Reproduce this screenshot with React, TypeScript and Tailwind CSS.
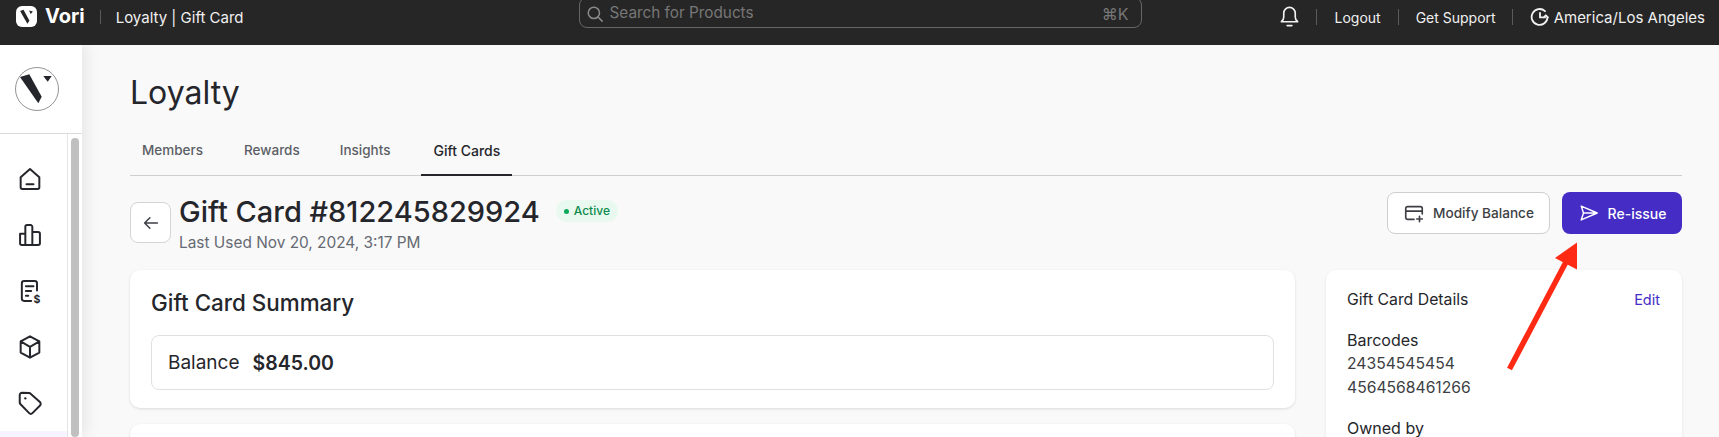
import React from "react";

function Sep({ h = "h-[14px]" }: { h?: string }) {
  return <div className={`w-px ${h} bg-[#5a5a5a]`} />;
}

const navIcons = [
  <path key="h" d="M4 10.5 12 3.5l8 7V19a1.5 1.5 0 0 1-1.5 1.5h-13A1.5 1.5 0 0 1 4 19ZM9 16.5h6" />,
  <path key="b" d="M3.5 11H8v9.5H5A1.5 1.5 0 0 1 3.5 19ZM8 5a1.5 1.5 0 0 1 1.5-1.5h3A1.5 1.5 0 0 1 14 5v15.5H8ZM14 9.5h4.9a1.6 1.6 0 0 1 1.6 1.6V19a1.5 1.5 0 0 1-1.5 1.5h-5" />,
  <path key="r" d="M13 20.5H7a2 2 0 0 1-2-2v-13a2 2 0 0 1 2-2h9a2 2 0 0 1 2 2v6M8.5 8h6.5M8.5 12h4.5M8.5 16h2" />,
  <path key="c" d="M12 2.8 20 7.2v9.6l-8 4.4-8-4.4V7.2ZM4 7.2l8 4.6 8-4.6M12 11.8v9.4" />,
  <path key="t" d="M3.2 5.2A2 2 0 0 1 5.2 3.2L11.4 3.5a2 2 0 0 1 1.1.5l8 7.2a2 2 0 0 1 .1 2.9l-6.5 6.6a2 2 0 0 1-2.8 0l-7.6-7.8a2 2 0 0 1-.5-1.2Z" />,
];

export default function App() {
  return (
    <div className="relative flex h-[437px] w-[1719px] flex-col overflow-hidden bg-[#f9f9f9] font-['Inter',sans-serif] text-[#25262b]">
      <header className="relative z-20 flex h-[45px] shrink-0 items-start bg-[#262626] text-white">
        <div className="ml-[16px] mt-[6px] flex h-[21px] w-[21px] items-center justify-center rounded-[6px] bg-white">
          <svg viewBox="0 0 40 40" className="h-[17px] w-[17px]">
            <polygon points="5,7 13,4 27,30 22,37" fill="#262626" />
            <polygon points="26,6 35,8 30,14" fill="#262626" />
          </svg>
        </div>
        <span className="ml-[8px] mt-[4px] text-[20px] font-bold leading-[24px]">Vori</span>
        <div className="ml-[15px] mt-[10px]"><Sep /></div>
        <span className="ml-[15px] mt-[7px] text-[15px] leading-[22px] text-[#f0f0f0]">Loyalty | Gift Card</span>
        <div className="ml-[335px] -mt-[3px] flex h-[31px] w-[563px] items-center rounded-[8px] border border-[#666] pl-[6px] pr-[12px] pt-[2px] text-[#777]">
          <svg viewBox="0 0 24 24" className="h-[18px] w-[18px]" fill="none" stroke="#8a8a8a" strokeWidth="2" strokeLinecap="round">
            <circle cx="10.5" cy="10.5" r="7.5" /><path d="m16 16 5.5 5.5" />
          </svg>
          <span className="ml-[6px] flex-1 text-[15.3px]">Search for Products</span>
          <span className="text-[16px]">⌘K</span>
        </div>
        <div className="ml-auto flex items-start pr-[14px]">
          <div className="mt-[5px]">
            <svg viewBox="0 0 24 24" className="h-[23px] w-[23px]" fill="none" stroke="#f2f2f2" strokeWidth="1.7" strokeLinecap="round" strokeLinejoin="round">
              <path d="M3.5 17.5c1.6-1.2 2.5-2.6 2.5-5V8.5a6 6 0 0 1 12 0v4c0 2.4.9 3.8 2.5 5ZM9.5 21.5h5" />
            </svg>
          </div>
          <div className="ml-[15px] mt-[9px]"><Sep h="h-[16px]" /></div>
          <span className="ml-[17px] mt-[7px] text-[14px] leading-[22px] text-[#f0f0f0]">Logout</span>
          <div className="ml-[17px] mt-[9px]"><Sep h="h-[16px]" /></div>
          <span className="ml-[17px] mt-[7px] text-[14px] leading-[22px] text-[#f0f0f0]">Get Support</span>
          <div className="ml-[16px] mt-[9px]"><Sep h="h-[16px]" /></div>
          <div className="ml-[17px] mt-[7px]">
            <svg viewBox="0 0 24 24" className="h-[20px] w-[20px]" fill="none" stroke="#f2f2f2" strokeWidth="2.2" strokeLinecap="round" strokeLinejoin="round">
              <path d="M21 12a9.5 9.5 0 1 1-3-7M12 7v5.5h6M21.5 12.5l-2.5-2.5-2.5 2.5" />
            </svg>
          </div>
          <span className="ml-[4px] mt-[7px] whitespace-nowrap text-[15px] leading-[22px] text-[#f0f0f0]">America/Los Angeles</span>
        </div>
      </header>

      <div className="flex min-h-0 flex-1">
        <aside className="z-10 -mt-px flex w-[82px] shrink-0 flex-col bg-white shadow-[4px_0_14px_rgba(0,0,0,0.08)]">
          <div className="flex h-[90px] shrink-0 items-center justify-center border-b border-[#dcdcdc] pr-[8px]">
            <svg viewBox="0 0 44 44" className="h-[44px] w-[44px]">
              <circle cx="22" cy="22" r="21.5" fill="#fff" stroke="#777" strokeWidth="0.8" />
              <polygon points="5,10 14.3,7.3 26.7,29.7 23.3,36.3" fill="#25262b" />
              <polygon points="28.3,9 36.7,9 32.7,14.7" fill="#25262b" />
            </svg>
          </div>
          <div className="flex min-h-0 flex-1">
            <div className="flex flex-1 flex-col border-r border-[#e5e5e5] pt-[17px]">
              {navIcons.map((icon, i) => (
                <div key={i} className="flex h-[56px] shrink-0 items-center justify-center pr-[7px]">
                  <svg viewBox="0 0 24 24" className="h-[28px] w-[28px]" fill="none" stroke="#25262b" strokeWidth="1.7" strokeLinecap="round" strokeLinejoin="round">
                    {icon}
                    {i === 2 && <text x="15" y="22" fontSize="9" fontWeight="700" fill="#25262b" stroke="none">$</text>}
                    {i === 4 && <circle cx="8" cy="8" r="1" fill="#25262b" stroke="none" />}
                  </svg>
                </div>
              ))}
              <div className="h-[56px] shrink-0 bg-[#f6f5ff]" />
            </div>
            <div className="w-[14px] shrink-0 px-[3px] pt-[4px]">
              <div className="h-full rounded-full bg-[#c0c0c0]" />
            </div>
          </div>
        </aside>

        <main className="min-w-0 flex-1 pl-[48px] pr-[37px]">
          <h1 className="mt-[28px] text-[32px] font-normal leading-[40px] text-[#25262b]">Loyalty</h1>
          <nav className="mt-[21px] flex h-[42px] border-b border-[#cfcfcf] text-[13.5px] font-medium text-[#5c5f66]">
            <div className="px-[12px] pt-[6px]">Members</div>
            <div className="ml-[17px] px-[12px] pt-[6px]">Rewards</div>
            <div className="ml-[16px] px-[12px] pt-[6px]">Insights</div>
            <div className="-mb-px ml-[19px] h-[42px] w-[91px] border-b-2 border-[#25262b] px-[12px] pt-[6px] text-[14px] text-[#25262b]">Gift Cards</div>
          </nav>

          <div className="mt-[16px] flex items-start">
            <button className="mt-[10px] flex h-[41px] w-[41px] items-center justify-center rounded-[8px] border border-[#d4d4d4] bg-white">
              <svg viewBox="0 0 24 24" className="h-[18px] w-[18px]" fill="none" stroke="#3d3f45" strokeWidth="2" strokeLinecap="round" strokeLinejoin="round">
                <path d="M20.5 12h-17M10.5 5l-7 7 7 7" />
              </svg>
            </button>
            <div className="ml-[8px] mt-[1px]">
              <div className="flex items-start">
                <span className="text-[29px] font-medium leading-[38px] text-[#25262b]">Gift Card #812245829924</span>
                <div className="ml-[16px] mt-[7px] flex h-[22px] items-center rounded-full bg-[#e9f9ef] px-[8px] text-[12px] font-medium text-[#0b8a4b]">
                  <span className="mr-[5px] h-[5px] w-[5px] rounded-full bg-[#0aa85a]" />
                  Active
                </div>
              </div>
              <div className="text-[15.4px] leading-[23px] text-[#666a73]">Last Used Nov 20, 2024, 3:17 PM</div>
            </div>
            <div className="ml-auto flex gap-[12px]">
              <button className="flex h-[42px] w-[163px] items-center justify-center rounded-[8px] border border-[#cfcfcf] bg-white text-[13.6px] font-medium text-[#3d3f45]">
                <svg viewBox="0 0 24 24" className="mr-[8px] h-[22px] w-[22px]" fill="none" stroke="#3d3f45" strokeWidth="1.8" strokeLinecap="round" strokeLinejoin="round">
                  <path d="M12 19H5a2 2 0 0 1-2-2V7a2 2 0 0 1 2-2h14a2 2 0 0 1 2 2v6M3 10h18M18 15.5v6M15 18.5h6" />
                </svg>
                Modify Balance
              </button>
              <button className="flex h-[42px] w-[120px] items-center justify-center rounded-[8px] bg-[#442cc4] text-[14px] font-medium text-white">
                <svg viewBox="0 0 24 24" className="mr-[8px] h-[22px] w-[22px]" fill="none" stroke="#fff" strokeWidth="1.6" strokeLinecap="round" strokeLinejoin="round">
                  <path d="M3.5 4.5 21 12 3.5 19.5l2.5-7.5ZM6 12h15" />
                </svg>
                Re-issue
              </button>
            </div>
          </div>

          <div className="mt-[16px] flex items-start gap-[31px]">
            <div className="flex w-[1165px] shrink-0 flex-col gap-[16px]">
              <section className="h-[138px] rounded-[10px] bg-white px-[21px] pt-[17px] shadow-[0_1px_3px_rgba(0,0,0,0.12)]">
                <h2 className="text-[22.4px] font-medium leading-[32px]">Gift Card Summary</h2>
                <div className="mt-[16px] flex h-[55px] items-center rounded-[8px] border border-[#e0e0e0] pl-[16px] pt-[2px]">
                  <span className="text-[19px]">Balance</span>
                  <span className="ml-[13px] text-[19.5px] font-semibold">$845.00</span>
                </div>
              </section>
              <section className="h-[60px] rounded-[10px] bg-white shadow-[0_1px_3px_rgba(0,0,0,0.12)]" />
            </div>
            <aside className="flex-1 rounded-[10px] bg-white pl-[21px] pr-[22px] pt-[18px] text-[16px] leading-[24px] shadow-[0_1px_3px_rgba(0,0,0,0.1)]">
              <div className="flex justify-between">
                <span className="text-[15.8px]">Gift Card Details</span>
                <span className="text-[14.5px] text-[#442cc4]">Edit</span>
              </div>
              <div className="mt-[16px]">Barcodes</div>
              <div className="text-[15.7px] text-[#3d3f45]">24354545454</div>
              <div className="text-[15.7px] text-[#3d3f45]">4564568461266</div>
              <div className="mt-[16px]">Owned by</div>
              <div className="h-[40px]" />
            </aside>
          </div>
        </main>
      </div>

      <svg viewBox="0 0 1719 437" className="pointer-events-none absolute left-0 top-0 z-30 h-[437px] w-[1719px]">
        <path d="M1509.5 369 1566 262" stroke="#ff2a14" strokeWidth="5.5" fill="none" />
        <polygon points="1577,242.5 1555,258 1577,269.5" fill="#ff2a14" />
      </svg>
    </div>
  );
}
